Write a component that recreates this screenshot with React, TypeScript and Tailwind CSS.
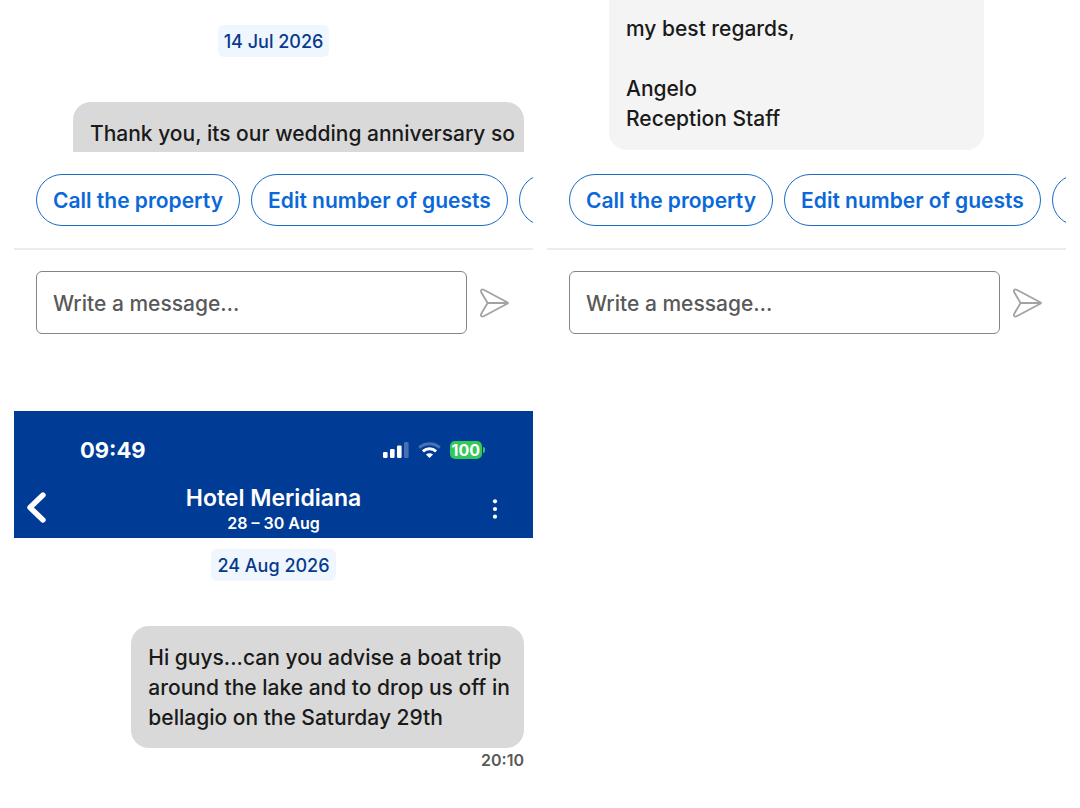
import React from "react";

function DateChip({ children }: { children: React.ReactNode }) {
  return (
    <div className="flex justify-center">
      <time className="rounded-md bg-[#eff6fe] px-1.5 pt-0.5 text-lg leading-[30px] font-medium text-[#073a8c]">
        {children}
      </time>
    </div>
  );
}

function SendIcon() {
  return (
    <svg
      className="size-8"
      viewBox="0 0 32 32"
      fill="none"
      stroke="#a2a2a2"
      strokeWidth="1.8"
      strokeLinecap="round"
      strokeLinejoin="round"
      aria-hidden="true"
    >
      <path d="M8.6 16 2.2 5.2C1.2 3.2 2.7 1.8 4.7 2.8L28.2 15.2C29.2 15.7 29.2 16.3 28.2 16.8L4.7 29.2C2.7 30.2 1.2 28.8 2.2 26.8Z" />
      <path d="M8.6 16H28.5" />
    </svg>
  );
}

const pill =
  "h-[52px] shrink-0 rounded-full border border-[#1b6bc8] bg-white px-4 pt-0.5 text-[21px] font-semibold whitespace-nowrap text-[#0a69d8]";

function Composer() {
  return (
    <section>
      <div className="flex gap-[11px] overflow-hidden py-[22px] pl-[22px]">
        <button type="button" className={pill}>
          Call the property
        </button>
        <button type="button" className={pill}>
          Edit number of guests
        </button>
        <button
          type="button"
          aria-label="More actions"
          className="h-[52px] w-40 shrink-0 rounded-full border border-[#1b6bc8] bg-white"
        />
      </div>
      <form
        className="flex items-center gap-3 border-t-2 border-[#ececec] px-[22px] pt-[21px]"
        onSubmit={(e) => e.preventDefault()}
      >
        <input
          type="text"
          aria-label="Write a message"
          placeholder="Write a message…"
          className="h-[63px] min-w-0 flex-1 rounded-md border border-[#858585] bg-white px-4 pt-0.5 text-[21px] font-medium text-[#1a1a1a] outline-none placeholder:text-[#595959]"
        />
        <button type="submit" aria-label="Send">
          <SendIcon />
        </button>
      </form>
    </section>
  );
}

function StatusIcons() {
  return (
    <div className="flex items-center gap-[9px]">
      <svg className="h-4 w-[26px]" viewBox="0 0 26 16" fill="#fff" aria-hidden="true">
        <rect x="0" y="10" width="4.6" height="6" rx="1.2" />
        <rect x="7" y="7" width="4.6" height="9" rx="1.2" />
        <rect x="14" y="3.4" width="4.6" height="12.6" rx="1.2" />
        <rect x="21" y="0" width="4.6" height="16" rx="1.2" opacity="0.28" />
      </svg>
      <svg className="h-4 w-[23px]" viewBox="0 0 23 16" fill="none" stroke="#fff" strokeWidth="3" aria-hidden="true">
        <path d="M1.2 5.6C7 .3 16 .3 21.8 5.6" opacity="0.28" />
        <path d="M4.9 9.4C8.7 6 14.3 6 18.1 9.4" />
        <path d="M11.5 16 7.9 12.5C10 10.8 13 10.8 15.1 12.5Z" fill="#fff" stroke="none" />
      </svg>
      <div className="flex items-center gap-px">
        <span className="rounded-[5px] bg-[#34c759] px-0.5 text-base leading-[18px] font-bold">100</span>
        <span className="h-1.5 w-0.5 rounded-r bg-[#34c759]" />
      </div>
    </div>
  );
}

function ChatHeader() {
  return (
    <header className="bg-[#003b95] pb-1.5 text-white">
      <div className="flex items-center justify-between pt-6 pr-12 pl-[66px]">
        <span className="text-[22px] leading-[30px] font-bold">09:49</span>
        <StatusIcons />
      </div>
      <div className="mt-4 grid grid-cols-[1fr_auto_1fr] items-center pr-[26px] pl-2.5">
        <button type="button" aria-label="Back" className="justify-self-start">
          <svg className="h-9 w-6" viewBox="0 0 24 36" fill="none" stroke="#fff" strokeWidth="5.4" strokeLinecap="round" strokeLinejoin="round" aria-hidden="true">
            <path d="M19 6 6 18.5 19 31" />
          </svg>
        </button>
        <div className="pl-4 text-center">
          <h1 className="text-[23px] leading-[34px] font-semibold">Hotel Meridiana</h1>
          <p className="text-base leading-[17px] font-semibold">28 – 30 Aug</p>
        </div>
        <button type="button" aria-label="Menu" className="mt-1 justify-self-end">
          <svg className="size-6" viewBox="0 0 24 24" fill="#fff" aria-hidden="true">
            <circle cx="12" cy="4.3" r="2.1" />
            <circle cx="12" cy="12" r="2.1" />
            <circle cx="12" cy="19.7" r="2.1" />
          </svg>
        </button>
      </div>
    </header>
  );
}

export default function App() {
  return (
    <main className="grid min-h-screen grid-cols-2 items-start gap-[14px] bg-white px-[14px] font-['Inter','Liberation_Sans',sans-serif] text-[#1a1a1a]">
      <div className="min-w-0">
        <section className="h-[152px] overflow-hidden pt-[25px]">
          <DateChip>14 Jul 2026</DateChip>
          <div className="mt-[45px] flex justify-end pr-[9px]">
            <p className="min-w-[76%] rounded-t-[18px] bg-[#d9d9d9] pt-[17px] pr-[9px] pb-[15px] pl-[17px] text-[21px] leading-[30px] font-medium">
              Thank you, its our wedding anniversary so
            </p>
          </div>
        </section>
        <Composer />
        <section className="mt-[77px]">
          <ChatHeader />
          <div className="pt-[11px]">
            <DateChip>24 Aug 2026</DateChip>
            <div className="mt-[45px] flex flex-col items-end pr-[9px]">
              <p className="min-w-[77%] rounded-[18px] bg-[#d9d9d9] pt-[17px] pr-[9px] pb-[15px] pl-[17px] text-[21px] leading-[30px] font-medium">
                Hi guys...can you advise a boat trip
                <br />
                around the lake and to drop us off in
                <br />
                bellagio on the Saturday 29th
              </p>
              <time className="mt-0.5 text-base leading-5 font-semibold text-[#595959]">20:10</time>
            </div>
          </div>
        </section>
      </div>

      <div className="min-w-0">
        <section className="h-[152px] overflow-hidden pl-[62px]">
          <p className="w-[82%] rounded-b-[18px] bg-[#f4f4f4] px-[17px] pt-[14px] pb-4 text-[21px] leading-[30px] font-medium">
            my best regards,
            <br />
            <br />
            Angelo
            <br />
            Reception Staff
          </p>
        </section>
        <Composer />
      </div>
    </main>
  );
}
